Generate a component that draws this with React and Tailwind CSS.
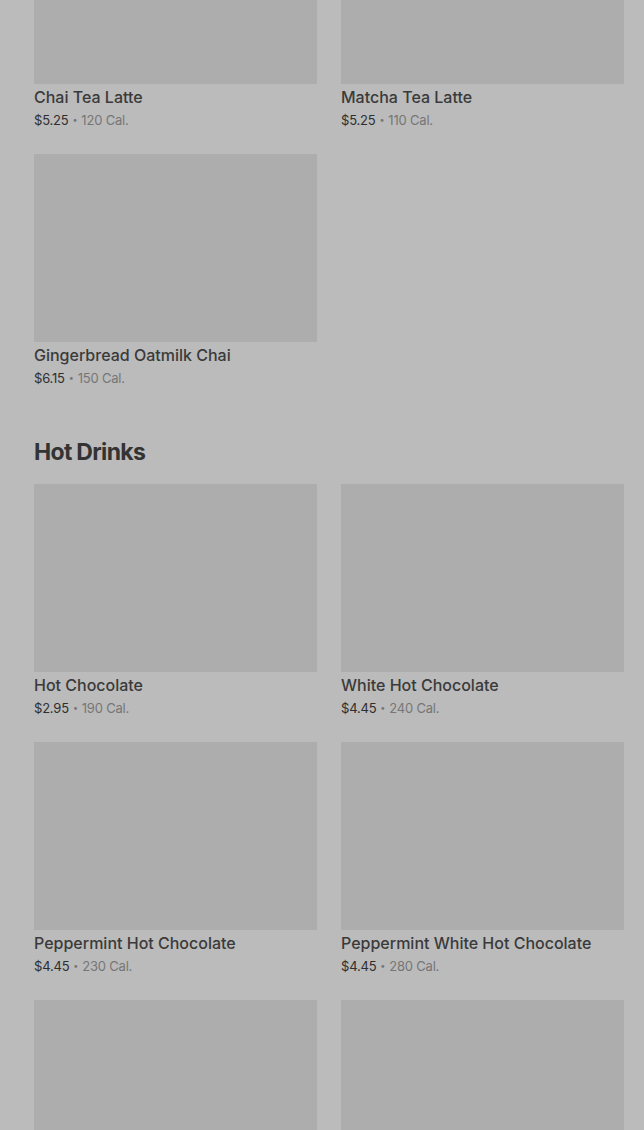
import React from 'react';

const sections = [
  {
    title: null,
    items: [
      { name: 'Chai Tea Latte', price: '$5.25', cal: '120 Cal.' },
      { name: 'Matcha Tea Latte', price: '$5.25', cal: '110 Cal.' },
      { name: 'Gingerbread Oatmilk Chai', price: '$6.15', cal: '150 Cal.' },
    ],
  },
  {
    title: 'Hot Drinks',
    items: [
      { name: 'Hot Chocolate', price: '$2.95', cal: '190 Cal.' },
      { name: 'White Hot Chocolate', price: '$4.45', cal: '240 Cal.' },
      { name: 'Peppermint Hot Chocolate', price: '$4.45', cal: '230 Cal.' },
      { name: 'Peppermint White Hot Chocolate', price: '$4.45', cal: '280 Cal.' },
      // the last row is cut by the fold, only the pictures show
      { name: null },
      { name: null },
    ],
  },
];

const ItemCard = ({ item }) => (
  <div className="flex flex-col">
    <div className="h-[188px] w-full bg-[#adadad]" />
    {item.name && (
      <>
        <div className="mt-[2px] text-[16px] leading-[22px] font-medium text-[#3a3a3a]">{item.name}</div>
        <div className="mt-[2px] flex items-center text-[13px] leading-[20px] text-[#767676] tracking-[-0.2px]">
          <span className="text-[#2f2f2f]">{item.price}</span>
          <span className="px-[4px] text-[9px]">•</span>
          <span>{item.cal}</span>
        </div>
      </>
    )}
  </div>
);

const App = () => {
  return (
    <div
      className="min-h-screen bg-[#bbbbbb] overflow-hidden"
      style={{ fontFamily: 'Inter, "Noto Sans", sans-serif' }}
    >
      <div className="-mt-[104px] pl-[34px] pr-[20px]">
        {sections.map((section, i) => (
          <div key={i} className={i > 0 ? 'mt-[48px]' : ''}>
            {section.title && (
              <h2 className="text-[23px] leading-[32px] font-bold text-[#333333] tracking-[-0.7px] mb-[16px]">
                {section.title}
              </h2>
            )}
            <div className="grid grid-cols-2 gap-x-[24px] gap-y-[24px]">
              {section.items.map((item, j) => (
                <ItemCard key={j} item={item} />
              ))}
            </div>
          </div>
        ))}
      </div>
    </div>
  );
};

export default App;
